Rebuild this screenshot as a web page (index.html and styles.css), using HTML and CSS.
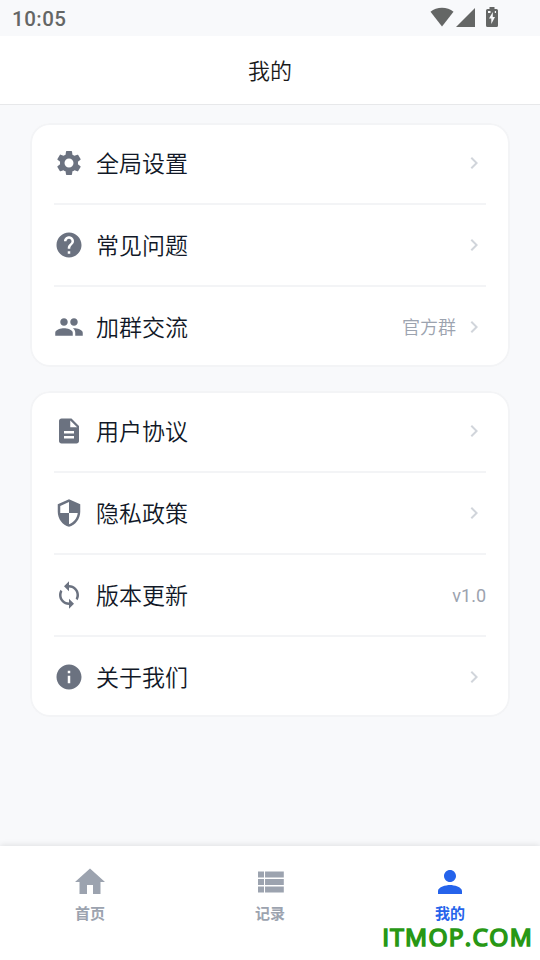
FILE: index.html
```html
<!DOCTYPE html>
<html lang="zh-CN">
<head>
<meta charset="utf-8">
<title>我的</title>
<link rel="stylesheet" href="styles.css">
</head>
<body>
<svg class="sprite" aria-hidden="true">
<symbol id="chevron" viewBox="0 0 24 24"><path d="M10 6 8.59 7.41 13.17 12l-4.58 4.59L10 18l6-6z"/></symbol>
</svg>
<div class="statusbar">
  <span class="clock">10:05</span>
  <svg class="wifi" viewBox="0 0 24 20"><path d="M12 19.5 .5 4.8C3.6 2.2 7.6.8 12 .8s8.400 1.400 11.500 4z"/></svg>
  <svg class="signal" viewBox="0 0 20 20"><path d="M0 20 19 1v19z"/></svg>
  <svg class="battery" viewBox="0 0 12 20"><path fill-rule="evenodd" d="M3.500 0h5v2H10.500A1.500 1.500 0 0 1 12 3.500v15a1.500 1.500 0 0 1-1.500 1.500h-9A1.500 1.500 0 0 1 0 18.500v-15A1.500 1.500 0 0 1 1.500 2h2zM2 4v2h2.500V4zM8.800 4v2H10V4zM6.800 5 3 11.500h2.300V17L9 10H6.800z"/></svg>
</div>
<header class="header">我的</header>
<main class="content">
  <section class="card">
    <div class="row">
      <svg class="icon" viewBox="0 0 24 24"><path d="M19.140 12.940c.04-.3.06-.61.06-.94 0-.32-.02-.64-.07-.94l2.030-1.580c.18-.14.23-.41.12-.61l-1.920-3.320c-.12-.22-.37-.29-.59-.22l-2.390.96c-.5-.38-1.030-.7-1.620-.94l-.36-2.540c-.04-.24-.24-.41-.48-.41h-3.840c-.24 0-.43.17-.47.41l-.36 2.540c-.59.24-1.130.57-1.620.94l-2.390-.96c-.22-.08-.47 0-.59.22L2.740 8.870c-.12.21-.08.47.12.61l2.030 1.580c-.05.3-.09.63-.09.94s.02.64.07.94l-2.030 1.580c-.18.14-.23.41-.12.61l1.920 3.320c.12.22.37.29.59.22l2.390-.96c.5.38 1.030.7 1.620.94l.36 2.540c.05.24.24.41.48.41h3.840c.24 0 .44-.17.47-.41l.36-2.540c.59-.24 1.130-.56 1.620-.94l2.390.96c.22.08.47 0 .59-.22l1.920-3.320c.12-.22.07-.47-.12-.61zM12 15.600c-1.980 0-3.600-1.620-3.600-3.600s1.620-3.600 3.600-3.600 3.600 1.620 3.600 3.600-1.620 3.600-3.600 3.600z"/></svg>
      <span class="label">全局设置</span><svg class="chevron"><use href="#chevron"/></svg>
    </div>
    <div class="row">
      <svg class="icon" viewBox="0 0 24 24"><path d="M12 2C6.480 2 2 6.480 2 12s4.480 10 10 10 10-4.480 10-10S17.520 2 12 2zm1 17h-2v-2h2zm2.070-7.750-.9.920C13.450 12.900 13 13.500 13 15h-2v-.5c0-1.100.45-2.100 1.170-2.830l1.240-1.260c.37-.36.59-.86.59-1.410 0-1.100-.9-2-2-2s-2 .9-2 2H8c0-2.210 1.790-4 4-4s4 1.790 4 4c0 .88-.36 1.680-.93 2.250z"/></svg>
      <span class="label">常见问题</span><svg class="chevron"><use href="#chevron"/></svg>
    </div>
    <div class="row">
      <svg class="icon" viewBox="0 0 24 24"><path d="M16 11c1.660 0 2.990-1.340 2.990-3S17.660 5 16 5s-3 1.340-3 3 1.340 3 3 3zm-8 0c1.660 0 2.990-1.340 2.990-3S9.660 5 8 5 5 6.340 5 8s1.340 3 3 3zm0 2c-2.330 0-7 1.170-7 3.500V19h14v-2.500C15 14.170 10.330 13 8 13zm8 0c-.29 0-.62.02-.97.05 1.160.84 1.970 1.970 1.970 3.450V19h6v-2.500c0-2.330-4.670-3.500-7-3.500z"/></svg>
      <span class="label">加群交流</span><span class="value">官方群</span><svg class="chevron"><use href="#chevron"/></svg>
    </div>
  </section>
  <section class="card">
    <div class="row">
      <svg class="icon" viewBox="0 0 24 24"><path d="M14 2H6c-1.100 0-1.990.9-1.990 2L4 20c0 1.100.89 2 1.990 2H18c1.100 0 2-.9 2-2V8zm2 16H8v-2h8zm0-4H8v-2h8zm-3-5V3.500L18.500 9z"/></svg>
      <span class="label">用户协议</span><svg class="chevron"><use href="#chevron"/></svg>
    </div>
    <div class="row">
      <svg class="icon" viewBox="0 0 24 24"><path d="M12 1 3 5v6c0 5.550 3.840 10.740 9 12 5.160-1.260 9-6.450 9-12V5zm0 10.990h7c-.53 4.120-3.280 7.790-7 8.940V12H5V6.300l7-3.110z"/></svg>
      <span class="label">隐私政策</span><svg class="chevron"><use href="#chevron"/></svg>
    </div>
    <div class="row">
      <svg class="icon" viewBox="0 0 24 24"><path d="M12 4V1L8 5l4 4V6c3.310 0 6 2.690 6 6 0 1.010-.25 1.970-.7 2.800l1.460 1.460C19.540 15.030 20 13.570 20 12c0-4.420-3.580-8-8-8zm0 14c-3.310 0-6-2.690-6-6 0-1.010.25-1.970.7-2.800L5.240 7.740C4.460 8.970 4 10.430 4 12c0 4.420 3.580 8 8 8v3l4-4-4-4z"/></svg>
      <span class="label">版本更新</span><span class="value version">v1.0</span>
    </div>
    <div class="row">
      <svg class="icon" viewBox="0 0 24 24"><path d="M12 2C6.480 2 2 6.480 2 12s4.480 10 10 10 10-4.480 10-10S17.520 2 12 2zm1 15h-2v-6h2zm0-8h-2V7h2z"/></svg>
      <span class="label">关于我们</span><svg class="chevron"><use href="#chevron"/></svg>
    </div>
  </section>
</main>
<nav class="tabbar">
  <div class="tab"><svg class="tab-icon" viewBox="0 0 24 24"><path d="M10 20v-6h4v6h5v-8h3L12 3 2 12h3v8z"/></svg><span>首页</span></div>
  <div class="tab"><svg class="tab-icon" viewBox="0 0 24 24"><path d="M4 14h4v-4H4zm0 5h4v-4H4zM4 9h4V5H4zm4.700 5h12.500v-4H8.700zm0 5h12.500v-4H8.700zM8.700 5v4h12.500V5z"/></svg><span>记录</span></div>
  <div class="tab active"><svg class="tab-icon" viewBox="0 0 24 24"><path d="M12 12c2.210 0 4-1.790 4-4s-1.790-4-4-4-4 1.790-4 4 1.790 4 4 4zm0 2c-2.670 0-8 1.340-8 4v2h16v-2c0-2.660-5.330-4-8-4z"/></svg><span>我的</span></div>
</nav>
<div class="watermark">ITMOP.COM</div>
</body>
</html>
```
FILE: styles.css
```css
* { box-sizing: border-box; }
body {
  margin: 0;
  height: 960px;
  display: flex;
  flex-direction: column;
  overflow: hidden;
  background: #f8f9fb;
  color: #111827;
  font-family: Roboto, "Noto Sans CJK SC", sans-serif;
}
svg { display: block; fill: currentColor; flex: none; }
.sprite { position: absolute; width: 0; height: 0; }
.statusbar {
  height: 36px;
  flex: none;
  display: flex;
  align-items: center;
  padding: 0 42px 2px 12px;
  color: #646665;
}
.clock { flex: 1; font-size: 20.5px; font-weight: 500; letter-spacing: .5px; line-height: 34px; padding-top: 4px; }
.wifi { width: 24px; height: 20px; margin-right: 2px; }
.signal { width: 20px; height: 20px; margin-right: 10px; }
.battery { width: 12px; height: 20px; }
.header {
  height: 69px;
  flex: none;
  padding-top: 1px;
  background: #fff;
  border-bottom: 1px solid #e7e8ea;
  color: #1a1a1a;
  text-align: center;
  font-size: 22px;
  font-weight: 350;
  line-height: 69px;
}
.content { flex: 1; padding: 18px 30px 0; }
.card {
  margin-bottom: 24px;
  padding: 0 24px;
  background: #fff;
  border-radius: 20px;
  box-shadow: inset 0 0 0 2px #f3f4f6;
}
.row { height: 82px; display: flex; align-items: center; border-bottom: 2px solid #f3f4f6; }
.row:last-child { height: 80px; border-bottom: 0; }
.icon { width: 30px; height: 30px; color: #6b7280; }
.label { flex: 1; margin-left: 12px; padding-top: 4px; font-size: 23px; font-weight: 350; line-height: 34px; }
.value { color: #9ca3af; font-size: 18px; font-weight: 350; line-height: 26px; margin-right: 6px; padding-top: 2px; }
.version { margin-right: 0; font-weight: 400; }
.chevron { width: 24px; height: 24px; color: #d1d5db; }
.tabbar {
  height: 114px;
  flex: none;
  display: flex;
  background: #fff;
  box-shadow: 0 -1px 6px rgba(0, 0, 0, .1);
}
.tab {
  flex: 1;
  padding-top: 18px;
  display: flex;
  flex-direction: column;
  align-items: center;
  color: #9ca3af;
  font-size: 15px;
  font-weight: 600;
  line-height: 20px;
}
.tab-icon { width: 36px; height: 36px; margin-bottom: 4px; }
.active { color: #2563eb; }
.watermark {
  position: absolute;
  right: 7px;
  bottom: 11px;
  color: #289815;
  font: 400 24.5px/24px "Open Sans", sans-serif;
  letter-spacing: 1.3px;
  -webkit-text-stroke: 1.7px #289815;
}
```
